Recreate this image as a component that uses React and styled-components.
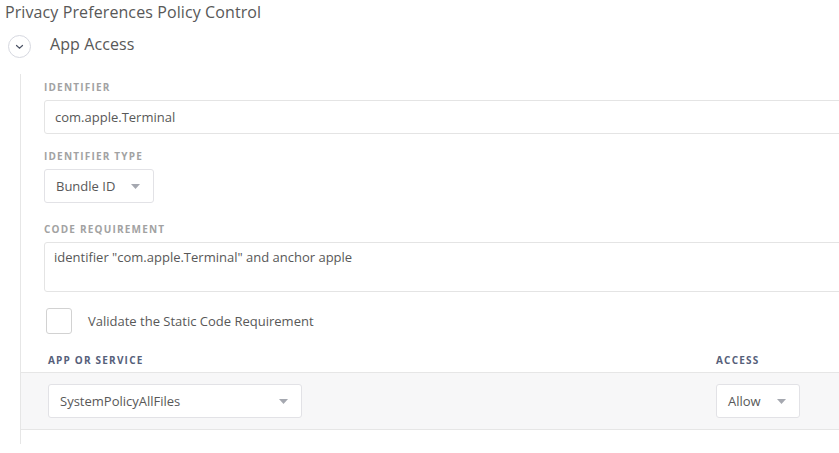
import styled, { createGlobalStyle } from 'styled-components'

const GlobalStyle = createGlobalStyle`
	html, body {
		margin: 0;
		padding: 0;
		background: #fff;
	}
	body {
		font-family: "Open Sans", Lato, sans-serif;
		color: #585858;
	}
`

const Caret = () => (
	<svg width="9" height="5" viewBox="0 0 9 5">
		<path d="M0 0 L9 0 L4.5 5 Z" fill="#a5a8b0" />
	</svg>
)

const Chevron = () => (
	<svg width="9" height="6" viewBox="0 0 9 6">
		<path d="M1.5 1.5 L4.5 4.3 L7.5 1.5" fill="none" stroke="#4d5466" strokeWidth="1.2" strokeLinecap="round" />
	</svg>
)

const App = () => {
	return (
		<Page>
			<GlobalStyle />
			<Title>Privacy Preferences Policy Control</Title>
			<SectionHeader>
				<Toggle><Chevron /></Toggle>
				<SectionTitle>App Access</SectionTitle>
			</SectionHeader>
			<Body>
				<Fields>
					<Label top={1}>Identifier</Label>
					<Input>com.apple.Terminal</Input>

					<Label top={16}>Identifier Type</Label>
					<Select width={110}>
						<span>Bundle ID</span>
						<Caret />
					</Select>

					<Label top={20}>Code Requirement</Label>
					<TextArea>identifier "com.apple.Terminal" and anchor apple</TextArea>

					<CheckRow>
						<Checkbox />
						<CheckLabel>Validate the Static Code Requirement</CheckLabel>
					</CheckRow>
				</Fields>

				<Table>
					<HeadRow>
						<HeadCell>App or Service</HeadCell>
						<HeadCell>Access</HeadCell>
					</HeadRow>
					<Row>
						<Select width={254} bg="#fff">
							<span>SystemPolicyAllFiles</span>
							<Caret />
						</Select>
						<Select width={84} bg="#fff">
							<span>Allow</span>
							<Caret />
						</Select>
					</Row>
				</Table>
			</Body>
		</Page>
	)
}

export default App

const Page = styled.div`
	width: 839px;
	height: 453px;
	overflow: hidden;
	padding: 0 0 0 5px;
	box-sizing: border-box;
`

const Title = styled.div`
	font-size: 16px;
	line-height: 25px;
	letter-spacing: 0.1px;
	color: #585858;
`

const SectionHeader = styled.div`
	display: flex;
	align-items: center;
	margin-top: 10px;
`

const Toggle = styled.div`
	display: flex;
	align-items: center;
	justify-content: center;
	width: 23px;
	height: 23px;
	margin-left: 3px;
	border: 1px solid #d6d8e0;
	border-radius: 50%;
	box-sizing: border-box;
	background: #fff;
	padding-top: 1px;
`

const SectionTitle = styled.div`
	font-size: 16px;
	letter-spacing: 0.1px;
	color: #585858;
	margin-left: 19px;
	margin-top: -5px;
`

const Body = styled.div`
	margin-top: 16px;
	margin-left: 15px;
	border-left: 1px solid #e6e6e6;
	padding: 6px 0 14px;
`

const Fields = styled.div`
	display: flex;
	flex-direction: column;
	padding-left: 23px;
`

const Label = styled.div`
	font-size: 10px;
	line-height: 12px;
	font-weight: 700;
	letter-spacing: 1.2px;
	text-transform: uppercase;
	color: #a2a2a2;
	margin-top: ${props => props.top || 0}px;
	margin-bottom: 7px;
`

const Input = styled.div`
	height: 34px;
	display: flex;
	align-items: center;
	padding-left: 10px;
	margin-right: -20px;
	border: 1px solid #e4e4e4;
	border-radius: 3px;
	box-sizing: border-box;
	font-size: 13px;
	color: #585858;
`

const TextArea = styled(Input)`
	height: 50px;
	align-items: flex-start;
	padding-top: 5px;
	padding-left: 9px;
`

const Select = styled.div`
	width: ${props => props.width}px;
	height: 34px;
	display: flex;
	align-items: center;
	justify-content: space-between;
	padding: 0 13px 0 11px;
	border: 1px solid #e2e2e6;
	border-radius: 3px;
	box-sizing: border-box;
	background: ${props => props.bg || 'transparent'};
	font-size: 13px;
	color: #585858;
`

const CheckRow = styled.div`
	display: flex;
	align-items: center;
	margin-top: 16px;
	margin-left: 2px;
`

const Checkbox = styled.div`
	width: 26px;
	height: 26px;
	border: 1px solid #d2d2d2;
	border-radius: 3px;
	box-sizing: border-box;
	background: #fff;
`

const CheckLabel = styled.div`
	font-size: 13px;
	color: #585858;
	margin-left: 16px;
	margin-top: -1px;
`

const Table = styled.div`
	margin-top: 10px;
`

const HeadRow = styled.div`
	display: grid;
	grid-template-columns: 668px 1fr;
	padding: 10px 0 6px 27px;
	border-bottom: 1px solid #e6e6e6;
`

const HeadCell = styled.div`
	font-size: 10px;
	line-height: 12px;
	font-weight: 700;
	letter-spacing: 1.2px;
	text-transform: uppercase;
	color: #56607a;
`

const Row = styled.div`
	display: grid;
	grid-template-columns: 668px 1fr;
	align-items: center;
	padding: 11px 0 11px 27px;
	background: #f7f7f8;
	border-bottom: 1px solid #e6e6e6;
`
